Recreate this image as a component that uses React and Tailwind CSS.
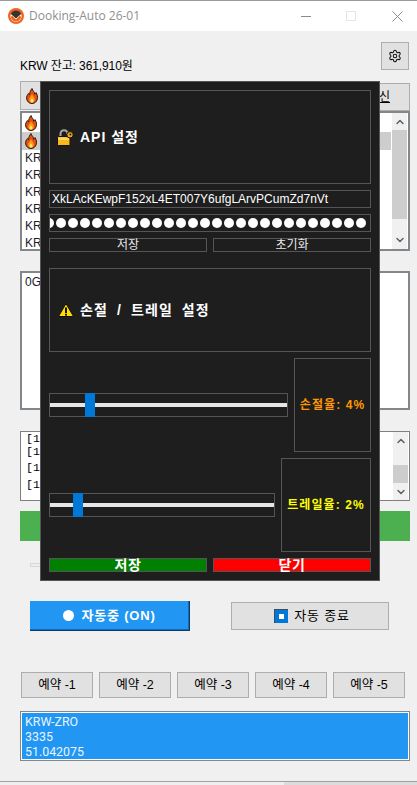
import React from "react";
import { Settings, ChevronUp, ChevronDown } from "lucide-react";

const FONT = "font-['Liberation_Sans','Noto_Sans_CJK_KR',sans-serif]";

function Flame() {
  return (
    <svg width="12" height="16" viewBox="0 0 12 16" className="shrink-0">
      <path d="M6 .5C6.500 3 9 4 8.600 6.200 10 5.600 10 4.600 10 4.600c1.400 2 1.800 4.400 1.300 6.400C10.700 13.800 8.600 15.500 6 15.500S1.200 13.800.7 11C.2 8.500 1.500 6.800 2.400 5.500 3 6.300 3.300 6.800 3.700 6.900 3.300 4.600 4.700 2.300 6 .5Z" fill="#e8500f" stroke="#2b1a10" strokeWidth="1" />
      <path d="M6 6c.4 1.600 2.800 3 2.800 5.600C8.800 13.400 7.500 14.600 6 14.600s-2.800-1.200-2.800-3C3.200 9.500 5.300 8.200 6 6Z" fill="#fb9a1a" />
      <path d="M6 10.200c.5 1 1.500 1.500 1.500 2.700 0 .9-.7 1.600-1.500 1.600s-1.500-.7-1.500-1.600c0-1.200 1-1.700 1.500-2.700Z" fill="#ffe95a" />
    </svg>
  );
}

function Lock() {
  return (
    <svg width="17" height="17" viewBox="0 0 17 17" className="shrink-0">
      <path d="M3.500 9V5C3.500 2.500 5 1.200 7 1.200S10.500 2.500 10.500 5" fill="none" stroke="#a6a6a6" strokeWidth="2" />
      <rect x="0.500" y="7.500" width="12.500" height="9" rx="1" fill="#f7b71d" stroke="#141414" strokeWidth="1" />
      <rect x="1.500" y="8.500" width="10.500" height="2.500" fill="#ffd65a" />
      <circle cx="13" cy="5.800" r="3.200" fill="#f2aa18" stroke="#141414" strokeWidth="1" />
      <circle cx="13.400" cy="5.500" r="1" fill="#141414" />
    </svg>
  );
}

function Warn() {
  return (
    <svg width="16" height="14" viewBox="0 0 16 14" className="shrink-0">
      <path d="M8 .6 15.500 13.500H.5Z" fill="#ffdd00" stroke="#111" strokeWidth="1" strokeLinejoin="round" />
      <rect x="7" y="4.500" width="2" height="5.500" fill="#111" />
      <rect x="7" y="10.800" width="2" height="1.800" fill="#111" />
    </svg>
  );
}

function Logo() {
  return (
    <svg width="16" height="16" viewBox="0 0 16 16" className="shrink-0">
      <circle cx="8" cy="8" r="8" fill="#f0651d" />
      <circle cx="8" cy="8.300" r="5.600" fill="#fff" />
      <path d="M2.800 6C3.600 3.800 5.600 2.600 8 2.600S12.400 3.800 13.200 6L8 10.500Z" fill="#3a3230" />
      <path d="M4.500 8 8 11.400 11.500 8 13.300 8.500C12.800 11.500 10.700 13.600 8 13.600S3.200 11.500 2.700 8.500Z" fill="#f0651d" />
    </svg>
  );
}

function Gray({ children, className = "" }) {
  return (
    <button className={`flex items-center justify-center bg-[#e1e1e1] border border-[#adadad] text-black ${className}`}>
      {children}
    </button>
  );
}

function Box({ className = "", children }) {
  return <div className={`border border-[#555555] ${className}`}>{children}</div>;
}

function Slider({ thumbClass }) {
  return (
    <div className="relative h-[24px] flex-1 border border-[#555555] flex items-center">
      <div className="h-[4px] w-full bg-[#e6e6e6]" />
      <div className={`absolute -top-px h-[24px] w-[10px] bg-[#0078d7] ${thumbClass}`} />
    </div>
  );
}

export default function App() {
  const rows = ["KRW", "KRW", "KRW", "KRW", "KRW", "KRW"];
  return (
    <div className={`relative w-[417px] h-[785px] overflow-hidden bg-[#f0f0f0] text-[12px] text-black ${FONT}`}>
      <div className="h-px bg-[#9a9a9a]" />
      {/* title bar */}
      <div className="h-[30px] bg-white flex items-center pl-[8px]">
        <Logo />
        <span className="ml-[5px] text-[12px] text-[#8f8f8f] font-['Open_Sans',sans-serif]">Dooking-Auto 26-01</span>
        <div className="ml-auto flex items-center">
          <div className="w-[10px] h-px bg-[#8a8a8a] mr-[35px]" />
          <div className="w-[10px] h-[10px] border border-[#e4e4e4] mr-[36px]" />
          <svg width="11" height="11" viewBox="0 0 11 11" className="mr-[14px]"><path d="M.5.5l10 10M10.500.5l-10 10" stroke="#8a8a8a" strokeWidth="1" /></svg>
        </div>
      </div>

      <div className="pl-[20px] pr-[7px]">
        {/* balance + gear */}
        <div className="h-[50px] flex justify-between pt-[11px]">
          <span className="mt-[16px] h-[16px] leading-[16px] text-[12px] tracking-[-0.1px]">KRW 잔고: 361,910원</span>
          <button className="w-[28px] h-[28px] mr-px bg-[#e1e1e1] border border-[#adadad] flex items-center justify-center">
            <Settings size={14} strokeWidth={1.800} color="#111" />
          </button>
        </div>

        {/* header buttons */}
        <div className="h-[30px] flex items-end">
          <Gray className="w-[180px] h-[29px] !justify-start pl-[5px] self-start"><Flame /></Gray>
          <Gray className="flex-1 h-[28px] !justify-end pr-[19px]"><span className="underline text-[12px]">갱신</span></Gray>
        </div>

        {/* coin list */}
        <div className="h-[140px] border-2 border-[#82878c] bg-white flex w-[390px]">
          <div className="flex-1 min-w-0 pl-[3px] pt-[1px] mr-px">
            <div className="h-[18px] flex items-center"><Flame /></div>
            <div className="h-[18px] flex items-center bg-[#cdcdcd] -ml-[3px] pl-[3px]"><Flame /></div>
            {rows.map((r, i) => (
              <div key={i} className="h-[17px] leading-[17px] text-[12px] text-[#1c1c30]">{r}</div>
            ))}
          </div>
          <div className="w-[15px] mr-px bg-[#f0f0f0] flex flex-col items-center shrink-0">
            <div className="h-[17px] flex items-center"><ChevronUp size={12} strokeWidth={3} color="#606060" /></div>
            <div className="h-[89px] w-full bg-[#cdcdcd]" />
            <div className="flex-1 flex items-end pb-[3px]"><ChevronDown size={12} strokeWidth={3} color="#606060" /></div>
          </div>
        </div>

        {/* detail box */}
        <div className="mt-[20px] h-[139px] w-[390px] border-2 border-[#82878c] bg-white pl-[3px] pt-[1px]">
          <div className="text-[12px] leading-[16px] text-[#1c1c30]">0G</div>
        </div>

        {/* log */}
        <div className="mt-[21px] h-[70px] w-[390px] border border-[#7f7f7f] bg-white flex">
          <div className="flex-1 pl-[5px] text-[11.500px] font-['Liberation_Mono',monospace]">
            <div className="h-[13px] leading-[13px]">[1</div>
            <div className="h-[13px] leading-[13px]">[18</div>
            <div className="mt-px h-[17px] leading-[17px]">[18</div>
            <div className="h-[18px] leading-[18px]">[18</div>
          </div>
          <div className="w-[15px] mr-px bg-[#f0f0f0] flex flex-col items-center shrink-0">
            <div className="h-[17px] flex items-center"><ChevronUp size={12} strokeWidth={3} color="#606060" /></div>
            <div className="h-[16px]" />
            <div className="h-[18px] w-full bg-[#cdcdcd]" />
            <div className="flex-1 flex items-center"><ChevronDown size={12} strokeWidth={3} color="#606060" /></div>
          </div>
        </div>

        {/* progress */}
        <div className="mt-[10px] h-[30px] w-[390px] bg-[#4caf50]" />
        <div className="mt-[22px] ml-[10px] h-[4px] w-[260px] border border-[#d8d8d8] bg-[#ececec]" />

        {/* on/off */}
        <div className="mt-[34px] ml-[10px] flex items-center">
          <button className="w-[160px] h-[30px] bg-[#2196f3] border-b border-r border-r-[#0d3b66] border-b-[#0d3b66] shadow-[inset_-1px_-1px_0_#0d6cbf] flex items-center justify-center gap-[7px] text-white font-bold text-[13px] tracking-[0.8px]">
            <span className="w-[11px] h-[11px] rounded-full bg-white" />
            <span>자동중 (ON)</span>
          </button>
          <Gray className="ml-[41px] w-[158px] h-[28px] gap-[6px] pl-[4px] text-[13px]">
            <span className="w-[14px] h-[14px] bg-[#0078d7] border-l border-t border-[#404a58] flex items-center justify-center">
              <span className="w-[5px] h-[5px] bg-white" />
            </span>
            <span className="tracking-[0.8px]">자동 종료</span>
          </Gray>
        </div>

        {/* reserve */}
        <div className="mt-[41px] ml-px flex gap-[6px]">
          {["예약 -1", "예약 -2", "예약 -3", "예약 -4", "예약 -5"].map((t) => (
            <Gray key={t} className="w-[72px] h-[26px] text-[12.500px]">{t}</Gray>
          ))}
        </div>

        {/* selected */}
        <div className="mt-[13px] h-[50px] w-[390px] border border-[#82878c] bg-white p-px">
          <div className="h-full bg-[#2196f3] text-[#eaf4ff] pl-[3px] pt-[1px] text-[12.400px] leading-[15px] font-['Roboto',sans-serif]">
            <div>KRW-ZRO</div>
            <div>3335</div>
            <div>51.042075</div>
          </div>
        </div>
      </div>

      {/* window bottom edge */}
      <div className="absolute left-0 right-0 top-[781px] h-px bg-[#a0a0a0]" />
      <div className="absolute left-0 right-0 top-[782px] h-[3px] bg-[#efefef] flex justify-end">
        <div className="w-[133px] bg-[#dcdcdc]" />
      </div>

      {/* settings overlay */}
      <div className="absolute left-[40px] top-[81px] w-[340px] h-[500px] bg-[#1e1e1e] border border-[#555555] p-[8px] flex flex-col text-white">
        <Box className="h-[94px] flex items-center pl-[7px] gap-[6px]">
          <Lock />
          <span className="text-[14px] font-bold tracking-[1px]">API 설정</span>
        </Box>
        <Box className="mt-[6px] h-[18px] flex items-center pl-[2px] text-[12px]">
          XkLAcKEwpF152xL4ET007Y6ufgLArvPCumZd7nVt
        </Box>
        <Box className="mt-[6px] h-[18px] flex items-center overflow-hidden">
          <div className="flex gap-[2px] -ml-[6px]">
            {Array.from({ length: 27 }).map((_, i) => (
              <span key={i} className="w-[10px] h-[10px] rounded-full bg-white shrink-0" />
            ))}
          </div>
        </Box>
        <div className="mt-[6px] flex gap-[6px] h-[14px] text-[12px] text-[#e8e8e8]">
          <Box className="flex-1 flex items-center justify-center">저장</Box>
          <Box className="flex-1 flex items-center justify-center">초기화</Box>
        </div>
        <Box className="mt-[16px] h-[84px] flex items-center pl-[8px] gap-[6px]">
          <Warn />
          <span className="text-[14px] font-bold tracking-[1.1px] [word-spacing:4px]">손절 / 트레일 설정</span>
        </Box>
        <div className="mt-[6px] h-[94px] flex items-center gap-[6px]">
          <Slider thumbClass="left-[35px]" />
          <Box className="w-[77px] h-full flex items-center justify-center text-[12px] font-bold text-[#ff9800] whitespace-nowrap tracking-[1.1px]">손절율: 4%</Box>
        </div>
        <div className="mt-[6px] h-[94px] flex items-center gap-[6px]">
          <Slider thumbClass="left-[23px]" />
          <Box className="w-[90px] h-full flex items-center justify-center text-[12px] font-bold text-[#ffff00] whitespace-nowrap tracking-[1.1px]">트레일율: 2%</Box>
        </div>
        <div className="mt-[6px] flex gap-[6px] h-[14px] text-[14px] font-bold tracking-[0.5px]">
          <Box className="flex-1 bg-[#008000] flex items-center justify-center leading-none">저장</Box>
          <Box className="flex-1 bg-[#ff0000] flex items-center justify-center leading-none">닫기</Box>
        </div>
      </div>
    </div>
  );
}
